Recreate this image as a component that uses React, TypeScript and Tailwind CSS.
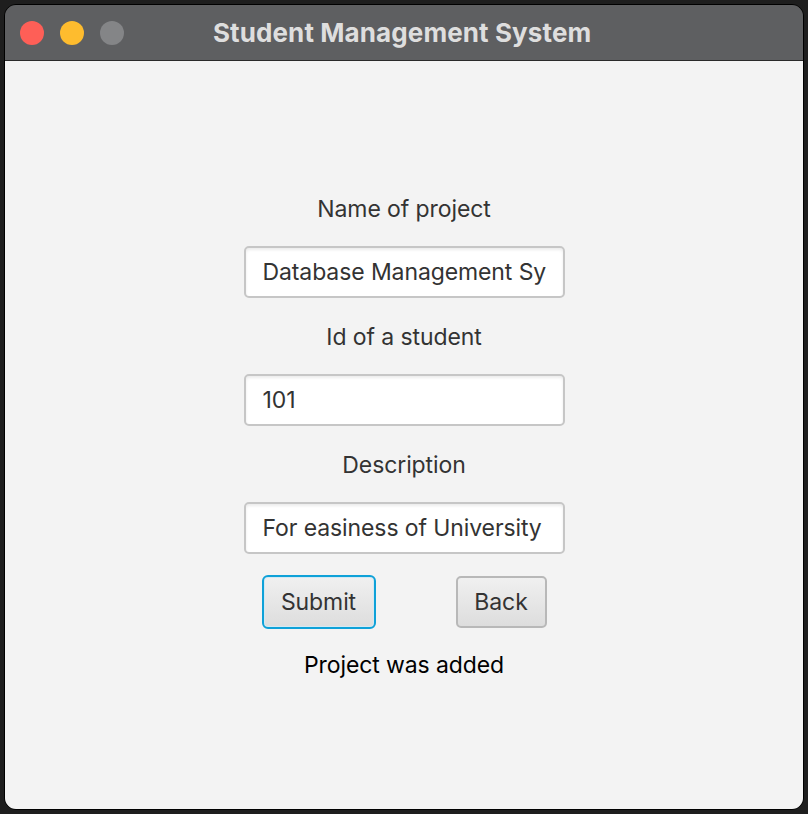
const font = { fontFamily: "Inter, 'Noto Sans', sans-serif" }

const Field = ({ value }: { value: string }) => {
  return (
    <div className="flex h-[52px] w-[321px] items-center overflow-hidden whitespace-nowrap rounded-[5px] border-2 border-[#c6c6c6] bg-white pl-[17px] text-[23px] tracking-[-0.1px] text-[#333333] shadow-[inset_0_2px_3px_rgba(0,0,0,0.08)]">
      <div className="w-[283px] overflow-hidden">{value}</div>
    </div>
  )
}

export default function App() {
  return (
    <div className="h-[814px] w-[808px] bg-[#1e1e1e] pl-[4px] pt-[4px]" style={font}>
      <div className="flex h-[806px] w-[800px] flex-col overflow-hidden rounded-[12px] border border-black">
        <div className="flex h-[56px] items-center border-b border-[#2a2a2a] bg-[#5e5f61] pl-[15px]">
          <div className="flex gap-[16px]">
            <span className="block h-[24px] w-[24px] rounded-full bg-[#fe5f57]" />
            <span className="block h-[24px] w-[24px] rounded-full bg-[#febc2e]" />
            <span className="block h-[24px] w-[24px] rounded-full bg-[#848587]" />
          </div>
          <div className="ml-[89px] text-[26px] font-bold tracking-[0.1px] text-[#dedede]">
            Student Management System
          </div>
        </div>
        <div className="flex flex-1 flex-col items-center bg-[#f3f3f3] pt-[132px]">
          <div className="text-[23px] leading-[32px] tracking-[-0.1px] text-[#333333]">Name of project</div>
          <div className="h-[21px]" />
          <Field value="Database Management Sy" />
          <div className="mt-[23px] text-[23px] leading-[32px] tracking-[-0.1px] text-[#333333]">Id of a student</div>
          <div className="h-[21px]" />
          <Field value="101" />
          <div className="mt-[23px] text-[23px] leading-[32px] tracking-[-0.1px] text-[#333333]">Description</div>
          <div className="h-[21px]" />
          <Field value="For easiness of University" />
          <div className="mt-[21px] flex items-center gap-[80px]">
            <button className="flex h-[54px] w-[114px] items-center justify-center rounded-[6px] border-2 border-[#0ea1d8] bg-gradient-to-b from-[#f0f0f0] to-[#dddddd] text-[23px] tracking-[-0.1px] text-[#333333] shadow-[inset_0_0_0_1px_#d2e9f3]">
              Submit
            </button>
            <button className="flex h-[52px] w-[91px] items-center justify-center rounded-[5px] border-2 border-[#b8b8b8] bg-gradient-to-b from-[#f0f0f0] to-[#dddddd] text-[23px] tracking-[-0.1px] text-[#333333]">
              Back
            </button>
          </div>
          <div className="mt-[20px] text-[23px] leading-[32px] tracking-[-0.1px] text-black">Project was added</div>
        </div>
      </div>
    </div>
  )
}
